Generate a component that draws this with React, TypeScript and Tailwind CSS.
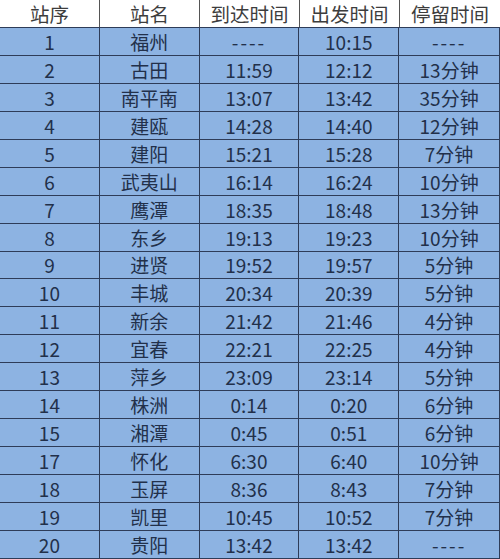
const rows = [
  ["1", "福州", "----", "10:15", "----"],
  ["2", "古田", "11:59", "12:12", "13分钟"],
  ["3", "南平南", "13:07", "13:42", "35分钟"],
  ["4", "建瓯", "14:28", "14:40", "12分钟"],
  ["5", "建阳", "15:21", "15:28", "7分钟"],
  ["6", "武夷山", "16:14", "16:24", "10分钟"],
  ["7", "鹰潭", "18:35", "18:48", "13分钟"],
  ["8", "东乡", "19:13", "19:23", "10分钟"],
  ["9", "进贤", "19:52", "19:57", "5分钟"],
  ["10", "丰城", "20:34", "20:39", "5分钟"],
  ["11", "新余", "21:42", "21:46", "4分钟"],
  ["12", "宜春", "22:21", "22:25", "4分钟"],
  ["13", "萍乡", "23:09", "23:14", "5分钟"],
  ["14", "株洲", "0:14", "0:20", "6分钟"],
  ["15", "湘潭", "0:45", "0:51", "6分钟"],
  ["17", "怀化", "6:30", "6:40", "10分钟"],
  ["18", "玉屏", "8:36", "8:43", "7分钟"],
  ["19", "凯里", "10:45", "10:52", "7分钟"],
  ["20", "贵阳", "13:42", "13:42", "----"],
];

const headers = ["站序", "站名", "到达时间", "出发时间", "停留时间"];

export default function App() {
  return (
    <div
      className="w-[500px] h-[559px] bg-white overflow-hidden"
      style={{ fontFamily: '"Noto Sans CJK SC", "Noto Sans", sans-serif' }}
    >
      {/* header */}
      <div className="grid grid-cols-5 h-[28px] border-b border-[#2e3c58] bg-white">
        {headers.map((h, i) => (
          <div
            key={h}
            className={`flex items-center justify-center text-[19.5px] text-[#3d3d3d] leading-none ${i < 4 ? "border-r border-[#555]" : ""}`}
          >
            {h}
          </div>
        ))}
      </div>
      {/* body */}
      <div className="bg-[#8db3e2] border-r border-[#2e3c58]">
        {rows.map((r) => (
          <div key={r[0]} className="grid grid-cols-5 h-[27.95px] border-b border-[#2e3c58]">
            {r.map((c, i) => (
              <div
                key={i}
                className={`flex items-center justify-center text-[19px] text-[#22304a] leading-none ${i < 4 ? "border-r border-[#2e3c58]" : ""}`}
              >
                {c === "----" ? <span className="tracking-[2px]">{c}</span> : c}
              </div>
            ))}
          </div>
        ))}
      </div>
    </div>
  );
}
